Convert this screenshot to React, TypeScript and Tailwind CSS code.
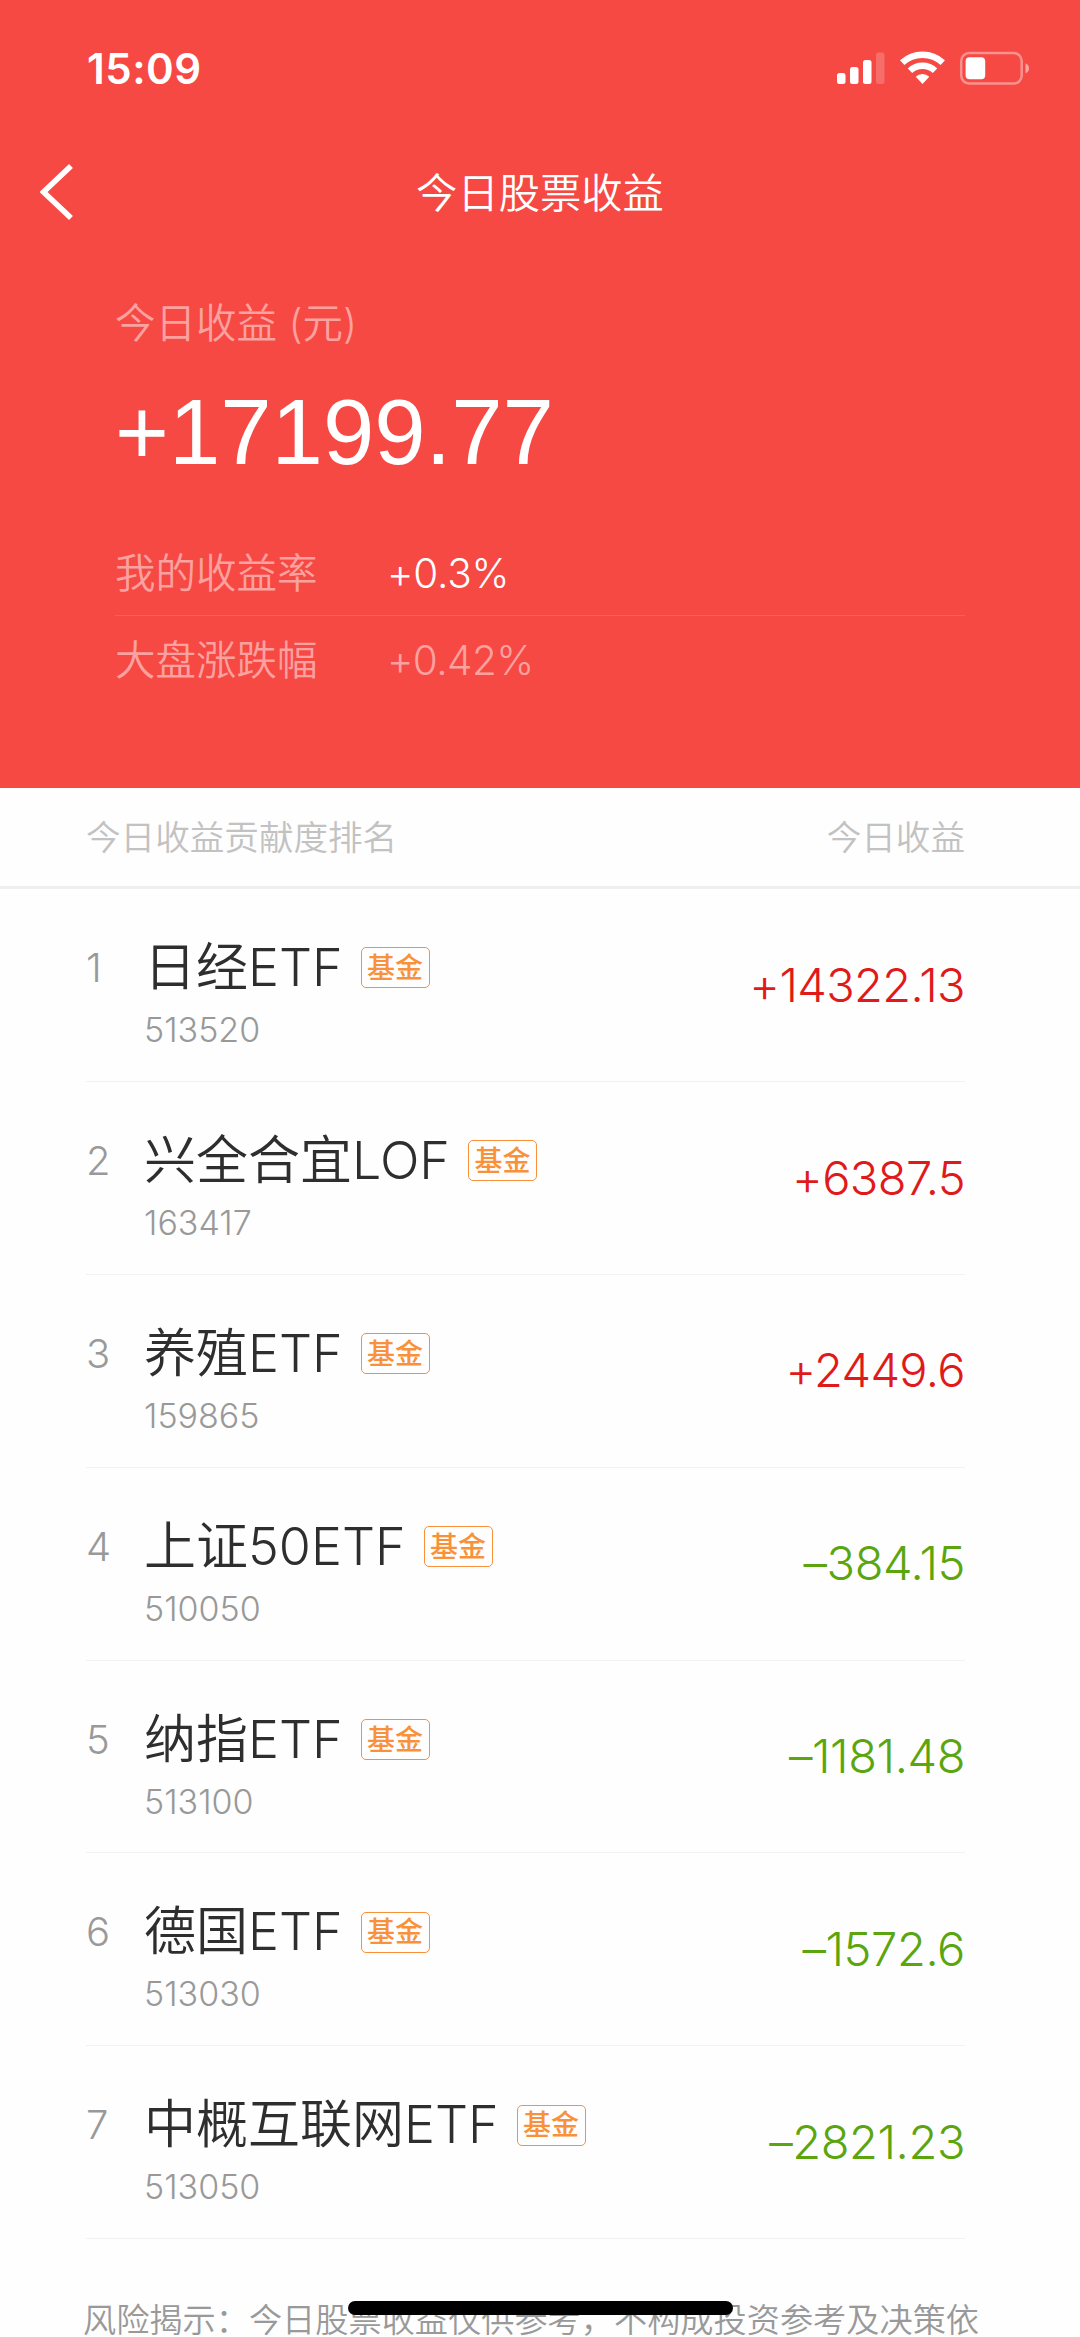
import React from "react";

type Holding = {
  name: string;
  code: string;
  profit: string;
};

const holdings: Holding[] = [
  { name: "日经ETF", code: "513520", profit: "+14322.13" },
  { name: "兴全合宜LOF", code: "163417", profit: "+6387.5" },
  { name: "养殖ETF", code: "159865", profit: "+2449.6" },
  { name: "上证50ETF", code: "510050", profit: "–384.15" },
  { name: "纳指ETF", code: "513100", profit: "–1181.48" },
  { name: "德国ETF", code: "513030", profit: "–1572.6" },
  { name: "中概互联网ETF", code: "513050", profit: "–2821.23" },
];

const StatusBar = () => (
  <div className="flex h-[138px] items-center justify-between pl-[87px] pr-[50px]">
    <span className="text-[42px] leading-none font-semibold tracking-[0.5px]">
      15:09
    </span>
    <svg width="194" height="36" viewBox="0 0 194 36" fill="#fff">
      <rect x="1" y="22" width="8.5" height="11" rx="2.5" />
      <rect x="14" y="16" width="8.5" height="17" rx="2.5" />
      <rect x="27" y="9" width="8.5" height="24" rx="2.5" />
      <rect x="40" y="1.5" width="8.5" height="31.5" rx="2.5" opacity="0.2" />
      <g fill="none" stroke="#fff" strokeWidth="6.4">
        <path d="M66.2 11.6A30 30 0 0 1 106.8 11.6" />
        <path d="M74 19.8A18 18 0 0 1 99 19.8" />
      </g>
      <path d="M79.7 25.7A9.6 9.6 0 0 1 93.3 25.7L86.5 33Z" />
      <rect
        x="125.2"
        y="2"
        width="60.5"
        height="30.6"
        rx="8"
        fill="none"
        stroke="#fff"
        strokeWidth="2.5"
        opacity="0.4"
      />
      <rect x="129.6" y="6.3" width="19.6" height="22" rx="4" />
      <path d="M189.5 12.3Q193 13.8 193 17.3T189.5 22.3Z" opacity="0.5" />
    </svg>
  </div>
);

const App = () => {
  return (
    <main className="relative h-[2337px] w-[1080px] overflow-hidden bg-[#fefefe] font-['Inter','Noto_Sans_CJK_SC',sans-serif] font-[360]">
      <header className="h-[788px] bg-[#f64944] text-white">
        <StatusBar />
        <div className="grid h-[108px] grid-cols-[1fr_auto_1fr] items-center px-10">
          <svg
            width="34"
            height="58"
            viewBox="0 0 34 58"
            fill="none"
            stroke="#fff"
            strokeWidth="5.6"
          >
            <path d="M31 3L3.5 29L31 55" />
          </svg>
          <h1 className="pt-0.5 text-[41.3px] leading-[60px]">今日股票收益</h1>
        </div>

        <div className="mx-[115px] pt-12">
          <p className="text-[40.5px] leading-[60px] text-[#fba19f]">
            今日收益 (元)
          </p>
          <p className="mt-[25px] font-['Liberation_Sans',sans-serif] text-[92.3px] leading-[106px] font-normal">
            +17199.77
          </p>
          <div className="mt-[45px] flex h-[86px] items-center border-b border-[#f85f5b] pt-[3px] text-[40.5px]">
            <span className="w-[272px] text-[#fba19f]">我的收益率</span>
            <span className="tracking-[-0.2px]">+0.3%</span>
          </div>
          <div className="flex h-[88px] items-center pt-0.5 text-[40.5px] text-[#fba19f]">
            <span className="w-[272px]">大盘涨跌幅</span>
            <span className="tracking-[-0.6px]">+0.42%</span>
          </div>
        </div>
      </header>

      <div className="flex h-[101px] items-center justify-between border-b-[3px] border-[#efefef] pt-0.5 pr-[115px] pl-[86px] text-[34.6px] text-[#c2c2c2]">
        <span>今日收益贡献度排名</span>
        <span>今日收益</span>
      </div>

      <ul className="pr-[115px] pl-[86px]">
        {holdings.map((item, i) => (
          <li
            key={item.code}
            className="flex h-[192.9px] items-center justify-between border-b border-[#f2f2f2]"
          >
            <div className="flex pt-[18px]">
              <span className="w-[58px] text-[40px] leading-[72px] text-[#999]">
                {i + 1}
              </span>
              <div>
                <div className="flex h-[72px] items-center gap-[18px]">
                  <span className="text-[52px] leading-[72px] text-[#2e2e2e]">
                    {item.name}
                  </span>
                  <span className="flex h-[41px] w-[69px] items-center justify-center rounded-[5px] border border-[#f9913a] text-[28px] leading-none font-medium text-[#f9913a]">
                    基金
                  </span>
                </div>
                <p className="text-[34px] leading-[52px] text-[#999]">
                  {item.code}
                </p>
              </div>
            </div>
            <span
              className={
                item.profit.startsWith("+")
                  ? "text-[47px] tracking-[-0.6px] text-[#e01a1a]"
                  : "text-[47px] tracking-[-0.4px] text-[#5ba50f]"
              }
            >
              {item.profit}
            </span>
          </li>
        ))}
      </ul>

      <p className="mt-[64px] pl-[83px] text-[33.2px] leading-[34px] whitespace-nowrap text-[#999]">
        风险揭示：今日股票收益仅供参考，不构成投资参考及决策依
      </p>

      {/* home indicator */}
      <div className="absolute bottom-[22px] left-[348px] h-[14px] w-[385px] rounded-full bg-black" />
    </main>
  );
};

export default App;
